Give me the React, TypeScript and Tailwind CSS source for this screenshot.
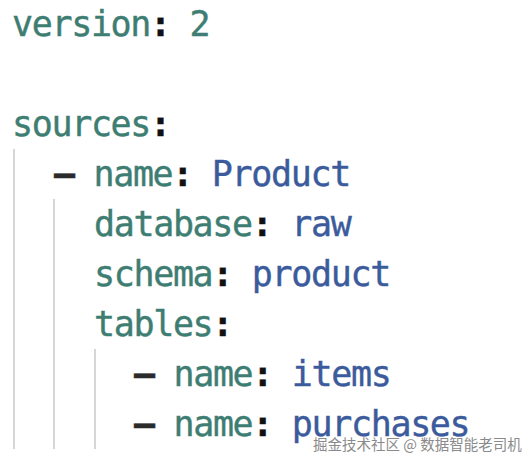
const K = "text-[#3e7d72]";
const V = "text-[#3b5b9c]";

function Line({ k, v, dash }: { k: string; v?: string; dash?: boolean }) {
  return (
    <div className="h-[50px] whitespace-pre">
      {dash && <span className="font-bold text-[#2b2b2b]">– </span>}
      <span className={K}>{k}</span>
      <span className="font-bold text-[#111]">:</span>
      {v && <span className={v === "2" ? K : V}> {v}</span>}
    </div>
  );
}

export default function App() {
  return (
    <div className="relative h-[465px] w-[531px] overflow-hidden bg-white">
      <div
        className="-mt-[1px] pl-[12px] text-[35px] leading-[50px] tracking-[-1.35px] [-webkit-text-stroke:0.4px]"
        style={{ fontFamily: '"DejaVu Sans Mono", monospace' }}
      >
        <Line k="version" v="2" />
        <div className="h-[50px]" />
        <Line k="sources" />
        <div className="ml-[1px] border-l-2 border-[#d6d6d6] pl-[39px]">
          <Line k="name" v="Product" dash />
          <div className="-ml-[1px] border-l-2 border-[#d6d6d6] pl-[39px]">
            <Line k="database" v="raw" />
            <Line k="schema" v="product" />
            <Line k="tables" />
            <div className="border-l-2 border-[#d6d6d6] pl-[38px]">
              <Line k="name" v="items" dash />
              <Line k="name" v="purchases" dash />
            </div>
          </div>
        </div>
      </div>
      <div
        className="absolute left-[313px] top-[434px] text-[14.5px] leading-[20px] text-[#8a8a8a] whitespace-nowrap"
        style={{
          fontFamily: '"Noto Sans CJK SC", sans-serif',
          textShadow: "0 0 2px #fff, 0 0 2px #fff",
        }}
      >
        掘金技术社区 @ 数据智能老司机
      </div>
    </div>
  );
}
